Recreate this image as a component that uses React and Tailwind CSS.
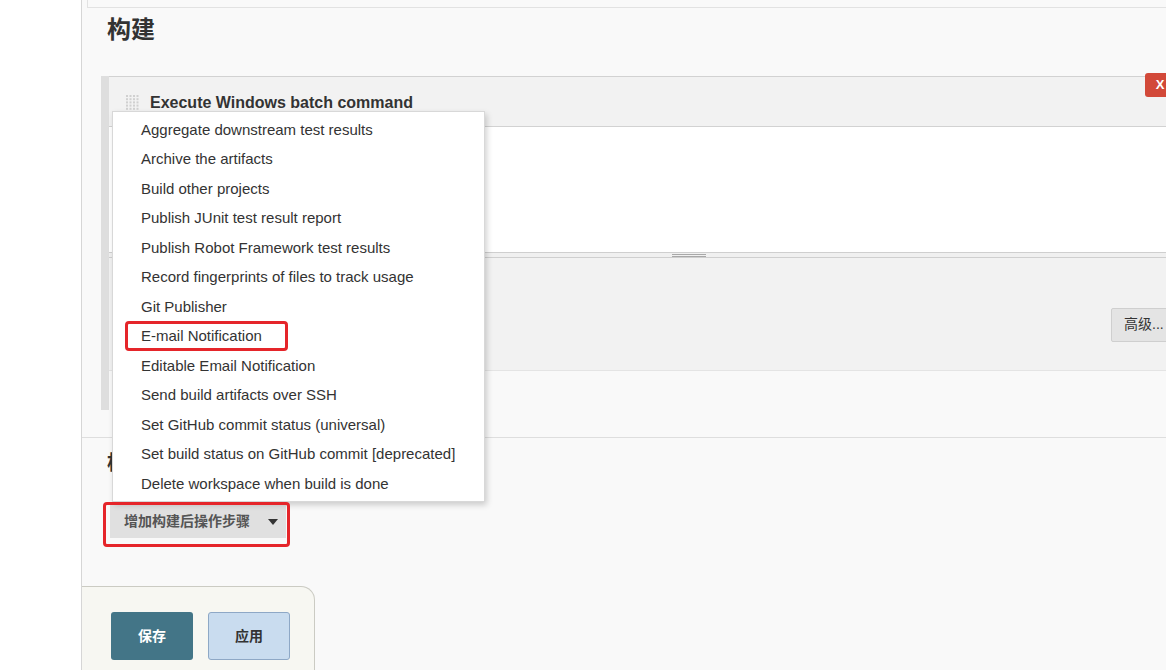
import React from 'react';

const menuItems = [
  'Aggregate downstream test results',
  'Archive the artifacts',
  'Build other projects',
  'Publish JUnit test result report',
  'Publish Robot Framework test results',
  'Record fingerprints of files to track usage',
  'Git Publisher',
  'E-mail Notification',
  'Editable Email Notification',
  'Send build artifacts over SSH',
  'Set GitHub commit status (universal)',
  'Set build status on GitHub commit [deprecated]',
  'Delete workspace when build is done',
];

const font = "font-['Liberation_Sans','Noto_Sans_CJK_SC',sans-serif]";

const DragHandle = () => (
  <svg width="14" height="16" viewBox="0 0 14 16" className="shrink-0">
    {[0, 1, 2, 3, 4].map((r) =>
      [0, 1, 2, 3].map((c) => (
        <rect key={`${r}-${c}`} x={c * 3.5} y={r * 3.2} width="2" height="2" fill="#d0d0d0" />
      ))
    )}
  </svg>
);

const App = () => {
  return (
    <div className={`flex h-[670px] w-[1166px] overflow-hidden bg-white text-[#333] ${font}`}>
      <div className="w-[81px] shrink-0 bg-white" />
      <div className="relative flex min-w-0 flex-1 flex-col border-l border-[#d6d6d6] bg-[#f9f9f9]">
        <div className="ml-[5px] h-[8px] shrink-0 border-b border-l border-[#e2e2e2] bg-[#f9f9f9]" />

        <div className="h-[68px] shrink-0 pl-[25px] pt-[7px]">
          <h2 className="text-[24px] font-bold leading-[30px] text-[#333]">构建</h2>
        </div>

        {/* build step */}
        <div className="ml-[19px] flex shrink-0">
          <div className="h-[334px] w-[8px] shrink-0 bg-[#dedede]" />
          <div className="relative flex w-[1100px] shrink-0 flex-col">
            <div className="flex h-[51px] items-center gap-[10px] border-t border-b border-[#d2d2d2] bg-[#f2f2f2] pl-[17px] pt-[2px]">
              <DragHandle />
              <span className="text-[16px] font-bold text-[#333]">Execute Windows batch command</span>
            </div>
            <div className="absolute left-[1036px] top-[-3px] flex h-[24px] w-[30px] items-center justify-center rounded-[3px] bg-[#d24939] text-[13px] font-bold text-white">
              X
            </div>
            <div className="h-[125px] bg-white" />
            <div className="flex h-[6px] items-center border-t border-b border-[#cfcfcf] bg-[#f0f0f0] pl-[563px]">
              <div className="h-[3px] w-[34px] border-t border-b border-[#a8a8a8]" />
            </div>
            <div className="flex h-[112px] items-center justify-start bg-[#f2f2f2] pl-[1002px] pt-[21px]">
              <div className="flex h-[34px] items-center rounded-[2px] border border-[#cfcfcf] bg-[#e4e4e4] px-[12px] text-[14px] text-[#333]">
                高级...
              </div>
            </div>
            <div className="h-[40px] border-t border-[#e4e4e4] bg-[#f9f9f9]" />
          </div>
        </div>

        <div className="mt-[27px] shrink-0 border-t border-[#dedede]" />

        {/* post build */}
        <div className="h-[148px] shrink-0 pl-[25px] pt-[12px]">
          <h2 className="text-[20px] font-bold leading-[26px] text-[#333]">构建后操作</h2>
          <div className="ml-[3px] mt-[29px] flex h-[33px] w-[176px] items-center justify-between bg-[#e0e0e0] pl-[14px] pr-[8px] text-[14px] font-bold text-[#555]">
            <span>增加构建后操作步骤</span>
            <span className="h-0 w-0 border-x-[5px] border-t-[6px] border-x-transparent border-t-[#333]" />
          </div>
        </div>

        {/* footer */}
        <div className="flex h-[85px] w-[233px] shrink-0 gap-[15px] rounded-tr-[14px] border-t border-r border-[#cbcbc3] bg-[#f7f7f2] pl-[29px] pt-[25px]">
          <div className="flex h-[48px] w-[82px] items-center justify-center rounded-[3px] bg-[#437587] text-[14px] font-bold text-white">
            保存
          </div>
          <div className="flex h-[48px] w-[82px] items-center justify-center rounded-[3px] border border-[#8ea8c6] bg-[#c9dcef] text-[14px] font-bold text-[#333]">
            应用
          </div>
        </div>

        {/* dropdown menu */}
        <div className="absolute left-[30px] top-[111px] flex w-[373px] flex-col border border-[#d8d8d8] bg-white pt-[3px] pb-[2px] shadow-[2px_3px_6px_rgba(0,0,0,0.18)]">
          {menuItems.map((item) => (
            <div key={item} className="flex h-[29.5px] items-center pl-[28px] text-[15px] text-[#333]">
              {item}
            </div>
          ))}
        </div>

        {/* annotation boxes */}
        <div className="pointer-events-none absolute left-[43px] top-[321px] h-[30px] w-[163px] rounded-[4px] border-[3px] border-[#e5252a]" />
        <div className="pointer-events-none absolute left-[21px] top-[502px] h-[45px] w-[187px] rounded-[4px] border-[3px] border-[#e5252a]" />
      </div>
    </div>
  );
};

export default App;
